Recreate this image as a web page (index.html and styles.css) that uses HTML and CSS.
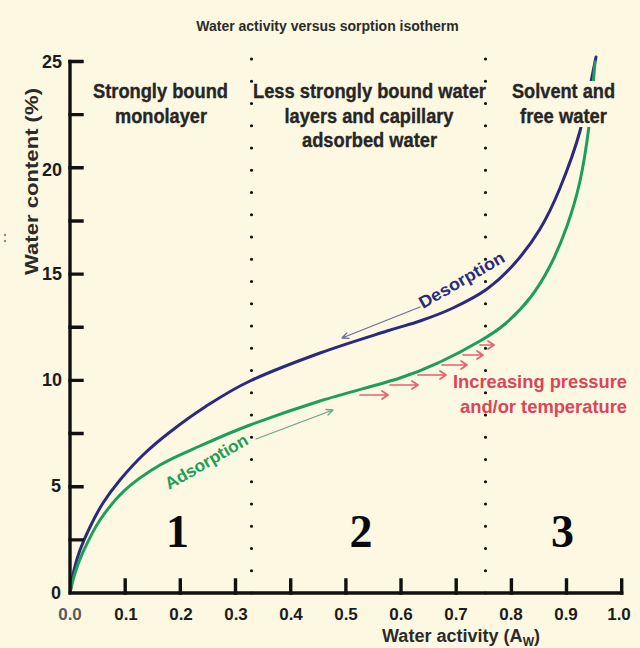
FILE: index.html
```html
<!DOCTYPE html>
<html lang="en">
<head>
<meta charset="utf-8">
<title>Water activity versus sorption isotherm</title>
<link rel="stylesheet" href="styles.css">
</head>
<body>
<div class="figure">
  <div class="title">Water activity versus sorption isotherm</div>
  <svg class="chart" width="640" height="608" viewBox="0 40 640 608" xmlns="http://www.w3.org/2000/svg">
    <!-- region separators -->
    <line class="divider" x1="251.5" y1="59" x2="251.5" y2="594"/>
    <line class="divider" x1="485.5" y1="59" x2="485.5" y2="594"/>

    <!-- curves -->
    <path class="curve desorb" data-points="70,593 74,570 80,550 90,527 103,503 120,480 143,455 170,432 205,407 250,381 320,353 387,331 420,321 453,308 487,289 515,263 540,229 560,188 580,131 596,57"/>
    <path class="curve adsorb" data-points="70,593 75,573 83,552 100,520 125,490 160,465 200,446 250,425 320,401 400,378 440,362 480,341 505,324 530,298 550,266 567,226 580,181 589,126 595,62"/>

    <!-- label backdrop covering curves -->
    <rect class="backdrop" x="508" y="81" width="112" height="46"/>

    <!-- axes -->
    <g class="axis">
      <path d="M70 61.5 V593 H621.7"/>
      <path d="M70 61.5 H82 M70 114.65 H82 M70 167.8 H82 M70 220.95 H82 M70 274.1 H82 M70 327.25 H82 M70 380.4 H82 M70 433.55 H82 M70 486.7 H82 M70 539.85 H82"/>
      <path d="M125.2 593 V580 M180.3 593 V580 M235.5 593 V580 M290.7 593 V580 M345.9 593 V580 M401 593 V580 M456.2 593 V580 M511.4 593 V580 M566.5 593 V580 M621.7 593 V580"/>
    </g>

    <g class="ytick">
      <text x="62" y="67.6">25</text>
      <text x="62" y="175.6">20</text>
      <text x="62" y="280.2">15</text>
      <text x="62" y="385.5">10</text>
      <text x="61" y="492.2">5</text>
      <text x="61" y="599">0</text>
    </g>
    <g class="xtick">
      <text class="zero" x="70" y="620">0.0</text>
      <text x="126" y="620">0.1</text>
      <text x="181" y="620">0.2</text>
      <text x="236" y="620">0.3</text>
      <text x="291" y="620">0.4</text>
      <text x="346" y="620">0.5</text>
      <text x="401" y="620">0.6</text>
      <text x="456" y="620">0.7</text>
      <text x="511" y="620">0.8</text>
      <text x="566" y="620">0.9</text>
      <text x="619" y="620">1.0</text>
    </g>

    <text class="axis-title" x="382" y="642" textLength="158" lengthAdjust="spacingAndGlyphs">Water activity (A<tspan class="sub" dy="4">W</tspan><tspan dy="-4">)</tspan></text>
    <text class="axis-title" transform="translate(37.5 181.5) rotate(-90)" x="0" y="0" text-anchor="middle" textLength="187" lengthAdjust="spacingAndGlyphs">Water content (%)</text>

    <!-- region labels -->
    <g class="region">
      <text x="160.5" y="98" textLength="135" lengthAdjust="spacingAndGlyphs">Strongly bound</text>
      <text x="161" y="122.5" textLength="92" lengthAdjust="spacingAndGlyphs">monolayer</text>
      <text x="369.5" y="98" textLength="233" lengthAdjust="spacingAndGlyphs">Less strongly bound water</text>
      <text x="369" y="122.5" textLength="169" lengthAdjust="spacingAndGlyphs">layers and capillary</text>
      <text x="369.5" y="147" textLength="135" lengthAdjust="spacingAndGlyphs">adsorbed water</text>
      <text x="563.5" y="98" textLength="103" lengthAdjust="spacingAndGlyphs">Solvent and</text>
      <text x="563.5" y="122.5" textLength="87" lengthAdjust="spacingAndGlyphs">free water</text>
    </g>

    <!-- curve annotations -->
    <text class="desorb-label" transform="translate(423 309) rotate(-30)" textLength="96" lengthAdjust="spacingAndGlyphs">Desorption</text>
    <path class="thin-arrow desorb-arrow" d="M420 307 L342 338 M349 338.4 L342 338 L346.8 332.9"/>
    <text class="adsorb-label" transform="translate(169 490) rotate(-30)" textLength="93" lengthAdjust="spacingAndGlyphs">Adsorption</text>
    <path class="thin-arrow adsorb-arrow" d="M256 439 L333 410 M326 409.5 L333 410 L328 415"/>

    <g class="push">
      <path d="M360 395 H388 M382 391 L388 395 L382 399"/>
      <path d="M390 385 H418 M412 381 L418 385 L412 389"/>
      <path d="M418 375 H446 M440 371 L446 375 L440 379"/>
      <path d="M442 365 H467 M461 361 L467 365 L461 369"/>
      <path d="M463 355 H483 M477 351 L483 355 L477 359"/>
      <path d="M480 345 H494 M488 341 L494 345 L488 349"/>
    </g>
    <g class="push-label">
      <text x="453" y="388" textLength="174" lengthAdjust="spacingAndGlyphs">Increasing pressure</text>
      <text x="460" y="413" textLength="167" lengthAdjust="spacingAndGlyphs">and/or temperature</text>
    </g>

    <g class="zone">
      <text x="177.5" y="547">1</text>
      <text x="361" y="547">2</text>
      <text x="562.5" y="547">3</text>
    </g>

    <g class="speck">
      <circle cx="5" cy="235" r="1.2"/>
      <circle cx="5" cy="241" r="1.2"/>
    </g>
  </svg>
</div>
<script src="script.js"></script>
</body>
</html>
```
FILE: styles.css
```css
html, body {
  margin: 0;
  padding: 0;
  background: #fcf8e2;
}

.figure {
  width: 640px;
  height: 648px;
  background: #fcf8e2;
  display: flex;
  flex-direction: column;
  overflow: hidden;
}

.title {
  height: 40px;
  box-sizing: border-box;
  padding: 18px 0 0 15px;
  text-align: center;
  font: bold 14px/16px "Liberation Sans", Arial, sans-serif;
  color: #2b2b2b;
}

.chart {
  display: block;
  flex: none;
}

.chart text {
  font-family: "Liberation Sans", Arial, sans-serif;
  font-weight: bold;
}

.divider {
  stroke: #141414;
  stroke-width: 3.2;
  stroke-linecap: round;
  stroke-dasharray: 0 22.25;
}

.curve {
  fill: none;
  stroke-width: 3;
  stroke-linecap: round;
  stroke-linejoin: round;
}

.desorb {
  stroke: #2c2a7f;
}

.adsorb {
  stroke: #1e9f57;
}

.backdrop {
  fill: #fcf8e2;
}

.axis path {
  fill: none;
  stroke: #111111;
  stroke-width: 3.4;
  stroke-linecap: square;
}

.ytick text {
  font-size: 18px;
  fill: #1c1c1c;
  text-anchor: end;
}

.xtick text {
  font-size: 17px;
  fill: #1c1c1c;
  text-anchor: middle;
}

.xtick .zero {
  fill: #5a5a5a;
}

.axis-title {
  font-size: 18px;
  fill: #2b2b2b;
}

.axis-title .sub {
  font-size: 12px;
}

.region text {
  font-size: 20px;
  fill: #262626;
  stroke: #262626;
  stroke-width: 0.35;
  text-anchor: middle;
}

.desorb-label {
  font-size: 17px;
  fill: #2c2a7f;
}

.adsorb-label {
  font-size: 17px;
  fill: #1e9f57;
}

.thin-arrow {
  fill: none;
  stroke-width: 1.3;
  stroke-linecap: round;
  stroke-linejoin: round;
}

.desorb-arrow {
  stroke: #6f6f9c;
}

.adsorb-arrow {
  stroke: #6aa58a;
}

.push path {
  fill: none;
  stroke: #e5626e;
  stroke-width: 1.7;
  stroke-linecap: round;
  stroke-linejoin: round;
}

.push-label text {
  font-size: 19px;
  fill: #dc4458;
}

.zone text {
  font-family: "Liberation Serif", "Times New Roman", serif;
  font-size: 46px;
  font-weight: bold;
  fill: #0a0a0a;
  text-anchor: middle;
}

.speck circle {
  fill: #8a8a8a;
}
```
FILE: script.js
```js
(function () {
  function catmullRom(points) {
    var d = "M" + points[0][0] + " " + points[0][1];
    for (var i = 0; i < points.length - 1; i++) {
      var p0 = points[i - 1] || points[i];
      var p1 = points[i];
      var p2 = points[i + 1];
      var p3 = points[i + 2] || p2;
      var c1x = p1[0] + (p2[0] - p0[0]) / 6;
      var c1y = p1[1] + (p2[1] - p0[1]) / 6;
      var c2x = p2[0] - (p3[0] - p1[0]) / 6;
      var c2y = p2[1] - (p3[1] - p1[1]) / 6;
      d += " C" + c1x.toFixed(2) + " " + c1y.toFixed(2) + " " +
        c2x.toFixed(2) + " " + c2y.toFixed(2) + " " + p2[0] + " " + p2[1];
    }
    return d;
  }
  var curves = document.querySelectorAll(".curve[data-points]");
  for (var k = 0; k < curves.length; k++) {
    var raw = curves[k].getAttribute("data-points").trim().split(/\s+/);
    var pts = raw.map(function (s) {
      var a = s.split(",");
      return [parseFloat(a[0]), parseFloat(a[1])];
    });
    curves[k].setAttribute("d", catmullRom(pts));
  }
})();
```
